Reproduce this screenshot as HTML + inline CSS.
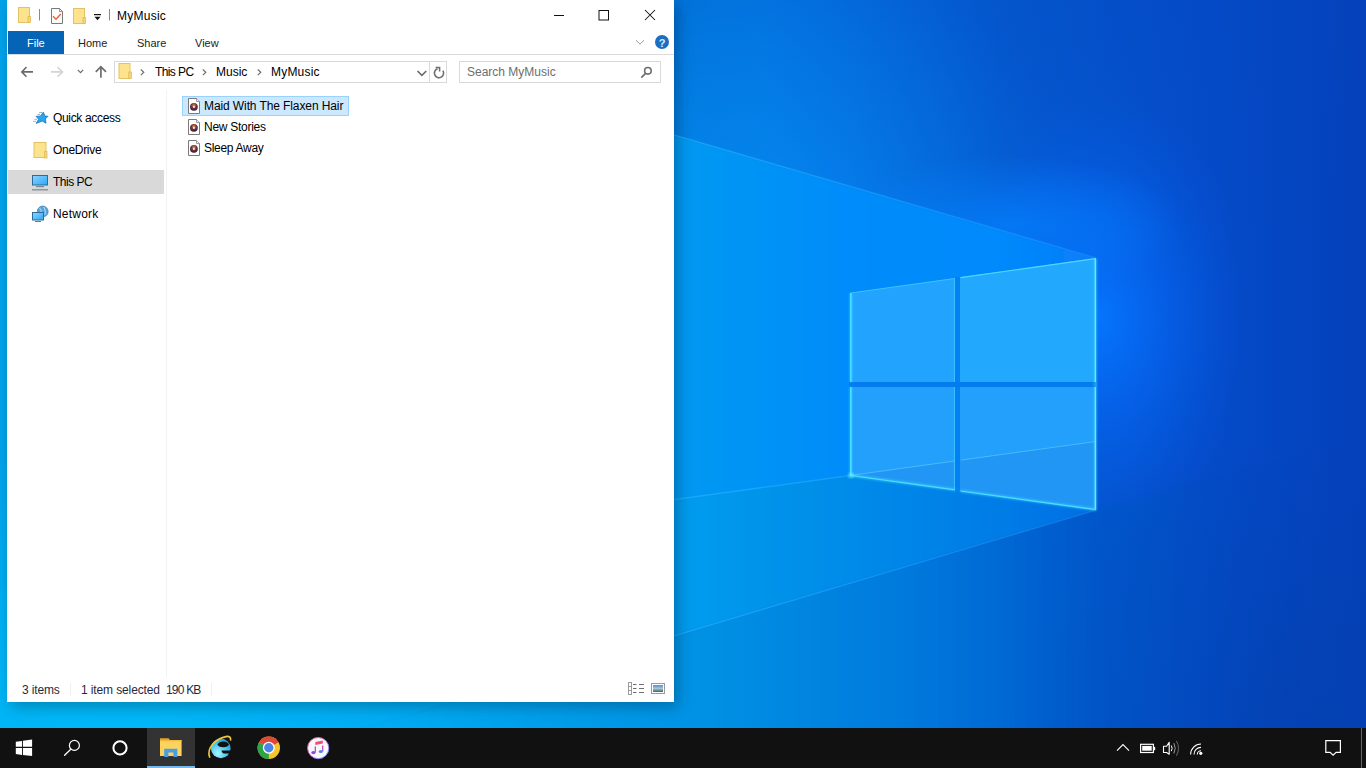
<!DOCTYPE html>
<html><head><meta charset="utf-8">
<style>
*{margin:0;padding:0;box-sizing:border-box}
html,body{width:1366px;height:768px;overflow:hidden;font-family:"Liberation Sans",sans-serif;background:#0a6fd6}
#wall{position:absolute;left:0;top:0;width:1366px;height:728px}
#win{position:absolute;left:7px;top:0;width:667px;height:702px;background:#fff;box-shadow:4px 5px 14px rgba(0,0,0,.26)}
.abs{position:absolute}
.t{position:absolute;font-size:12px;color:#000;white-space:nowrap;line-height:14px}
.tab{font-size:11px;color:#222}
.st{color:#1e2a44}
#ui{position:absolute;left:0;top:0;width:1366px;height:728px}
#taskbar{position:absolute;left:0;top:728px;width:1366px;height:40px;background:#111111}
</style></head>
<body>
<svg id="wall" width="1366" height="728" viewBox="0 0 1366 728">
  <defs>
    <linearGradient id="gTop" gradientUnits="userSpaceOnUse" x1="0" y1="0" x2="1366" y2="0">
      <stop offset="0" stop-color="rgb(0,150,228)"/>
      <stop offset="0.493" stop-color="rgb(0,131,228)"/>
      <stop offset="0.56" stop-color="rgb(2,130,234)"/>
      <stop offset="0.622" stop-color="rgb(3,118,230)"/>
      <stop offset="0.732" stop-color="rgb(4,92,210)"/>
      <stop offset="0.878" stop-color="rgb(4,76,202)"/>
      <stop offset="1" stop-color="rgb(4,64,186)"/>
    </linearGradient>
    <linearGradient id="gCone" gradientUnits="userSpaceOnUse" x1="0" y1="0" x2="1366" y2="0">
      <stop offset="0" stop-color="rgb(0,162,234)"/>
      <stop offset="0.51" stop-color="rgb(3,152,242)"/>
      <stop offset="0.622" stop-color="rgb(3,140,250)"/>
      <stop offset="0.73" stop-color="rgb(4,138,252)"/>
      <stop offset="0.80" stop-color="rgb(8,125,250)"/>
      <stop offset="1" stop-color="rgb(6,100,240)"/>
    </linearGradient>
    <linearGradient id="gBot" gradientUnits="userSpaceOnUse" x1="0" y1="0" x2="1366" y2="0">
      <stop offset="0" stop-color="rgb(0,176,244)"/>
      <stop offset="0.256" stop-color="rgb(0,174,244)"/>
      <stop offset="0.51" stop-color="rgb(5,146,228)"/>
      <stop offset="0.66" stop-color="rgb(3,122,221)"/>
      <stop offset="0.732" stop-color="rgb(4,105,212)"/>
      <stop offset="0.805" stop-color="rgb(5,88,200)"/>
      <stop offset="1" stop-color="rgb(6,65,182)"/>
    </linearGradient>
    <linearGradient id="botMaskG" gradientUnits="userSpaceOnUse" x1="1000" y1="0" x2="1300" y2="0">
      <stop offset="0" stop-color="#fff"/>
      <stop offset="1" stop-color="#000"/>
    </linearGradient>
    <mask id="botMask" maskUnits="userSpaceOnUse" x="0" y="0" width="1366" height="728">
      <rect width="1366" height="728" fill="url(#botMaskG)"/>
    </mask>
    <radialGradient id="glow" gradientUnits="userSpaceOnUse" cx="0" cy="0" r="1" gradientTransform="translate(1100,318) scale(150,230)">
      <stop offset="0" stop-color="rgb(6,118,255)" stop-opacity="0.95"/>
      <stop offset="0.45" stop-color="rgb(6,108,252)" stop-opacity="0.5"/>
      <stop offset="1" stop-color="rgb(6,90,230)" stop-opacity="0"/>
    </radialGradient>
    <radialGradient id="glow2" gradientUnits="userSpaceOnUse" cx="0" cy="0" r="1" gradientTransform="translate(1098,265) scale(45,60)">
      <stop offset="0" stop-color="rgb(30,150,255)" stop-opacity="0.8"/>
      <stop offset="1" stop-color="rgb(20,120,255)" stop-opacity="0"/>
    </radialGradient>
    <linearGradient id="beamFade" gradientUnits="userSpaceOnUse" x1="674" y1="0" x2="1096" y2="0">
      <stop offset="0" stop-color="#30b4ff" stop-opacity="0.6"/>
      <stop offset="0.6" stop-color="#30b4ff" stop-opacity="0.35"/>
      <stop offset="1" stop-color="#50c0ff" stop-opacity="0.2"/>
    </linearGradient>
    <radialGradient id="nearBeam" gradientUnits="userSpaceOnUse" cx="0" cy="0" r="1" gradientTransform="translate(760,210) scale(320,260)">
      <stop offset="0" stop-color="rgb(10,150,250)" stop-opacity="0.3"/>
      <stop offset="1" stop-color="rgb(10,150,250)" stop-opacity="0"/>
    </radialGradient>
    <radialGradient id="blGlow" gradientUnits="userSpaceOnUse" cx="0" cy="0" r="1" gradientTransform="translate(120,760) scale(560,320)">
      <stop offset="0" stop-color="rgb(0,195,255)" stop-opacity="0.7"/>
      <stop offset="1" stop-color="rgb(0,195,255)" stop-opacity="0"/>
    </radialGradient>
    <linearGradient id="gFloor" gradientUnits="userSpaceOnUse" x1="0" y1="0" x2="1366" y2="0">
      <stop offset="0" stop-color="rgb(0,166,236)"/>
      <stop offset="0.51" stop-color="rgb(3,155,238)"/>
      <stop offset="0.556" stop-color="rgb(4,148,234)"/>
      <stop offset="0.732" stop-color="rgb(4,124,230)"/>
      <stop offset="0.80" stop-color="rgb(6,112,230)"/>
      <stop offset="1" stop-color="rgb(6,90,220)"/>
    </linearGradient>
    <radialGradient id="glowUp" gradientUnits="userSpaceOnUse" cx="0" cy="0" r="1" gradientTransform="translate(1010,225) scale(170,70)">
      <stop offset="0" stop-color="rgb(4,130,255)" stop-opacity="0.7"/>
      <stop offset="1" stop-color="rgb(4,130,255)" stop-opacity="0"/>
    </radialGradient>
    <linearGradient id="topDark" gradientUnits="userSpaceOnUse" x1="0" y1="0" x2="0" y2="240">
      <stop offset="0" stop-color="rgb(4,70,190)" stop-opacity="0.3"/>
      <stop offset="1" stop-color="rgb(4,70,190)" stop-opacity="0"/>
    </linearGradient>
    <radialGradient id="brDark" gradientUnits="userSpaceOnUse" cx="0" cy="0" r="1" gradientTransform="translate(1300,740) scale(380,300)">
      <stop offset="0" stop-color="rgb(4,64,170)" stop-opacity="0.6"/>
      <stop offset="1" stop-color="rgb(4,64,170)" stop-opacity="0"/>
    </radialGradient>
    <filter id="soft" x="-5%" y="-5%" width="110%" height="110%"><feGaussianBlur stdDeviation="1.0"/></filter>
    <filter id="soft2" x="-5%" y="-5%" width="110%" height="110%"><feGaussianBlur stdDeviation="0.45"/></filter>
  </defs>
  <rect width="1366" height="728" fill="url(#gTop)"/>
  <rect width="1366" height="728" fill="url(#topDark)"/>
  <rect width="1366" height="728" fill="url(#nearBeam)"/>
  <rect width="1366" height="728" fill="url(#glow)"/>
  <rect width="1366" height="728" fill="url(#glowUp)"/>
  <polygon points="1096,258 -10,-64.4 -10,839 1096,510" fill="url(#gCone)" filter="url(#soft)"/>
  <polygon points="850,475.5 -10,593.4 -10,839 1096,510" fill="url(#gFloor)" filter="url(#soft)"/>
  <rect width="1366" height="728" fill="url(#blGlow)"/>
  <rect width="1366" height="728" fill="url(#brDark)"/>
  <g mask="url(#botMask)"><polygon points="1096,510 1400,430 1400,760 258,760" fill="url(#gBot)" filter="url(#soft)"/></g>
  
  
  <!-- beam lines -->
  <g filter="url(#soft2)" stroke="url(#beamFade)" stroke-width="1.3" fill="none">
    <line x1="674" y1="135" x2="1096" y2="258"/>
    <line x1="674" y1="499.6" x2="850" y2="475.5"/>
    <line x1="674" y1="635.8" x2="1096" y2="510"/>
  </g>
  <!-- panes -->
  
  <rect x="954.5" y="277" width="6" height="215" fill="rgb(4,128,242)"/>
  <rect x="849" y="381.5" width="248" height="6" fill="rgb(4,124,238)"/>
  <g filter="url(#soft2)">
    <polygon points="850,293 955,278 955,382 850,382" fill="rgb(34,164,254)"/>
    <polygon points="960,277.3 1096,258 1096,382 960,382" fill="rgb(34,168,253)"/>
    <polygon points="850,387 955,387 955,490 850,475.5" fill="rgb(34,160,252)"/>
    <polygon points="960,387 1096,387 1096,510 960,491" fill="rgb(34,160,252)"/>
    <polygon points="850,475.5 955,461 955,490" fill="rgb(34,150,244)"/>
    <polygon points="960,460.3 1096,441.5 1096,510 960,491" fill="rgb(34,150,244)"/>
    <g fill="none">
      <line x1="850.8" y1="382" x2="850.8" y2="293" stroke="#48e6ff" stroke-width="1.3"/>
      <line x1="850.8" y1="293" x2="955" y2="278.5" stroke="#3cc0ff" stroke-width="1"/>
      <line x1="954.4" y1="278.5" x2="954.4" y2="382" stroke="#38c4ff" stroke-width="1"/>
      <line x1="960.5" y1="277.6" x2="1095.5" y2="258.6" stroke="#50d8ff" stroke-width="1.1"/>
      <line x1="1095.4" y1="258.6" x2="1095.4" y2="382" stroke="#62f0ff" stroke-width="1.4"/>
      <line x1="850.8" y1="387" x2="850.8" y2="475.5" stroke="#4ceaff" stroke-width="1.3"/>
      <line x1="850.8" y1="475.5" x2="955" y2="489.8" stroke="#48d8ff" stroke-width="1.2"/>
      <line x1="954.4" y1="387" x2="954.4" y2="489.6" stroke="#38c4ff" stroke-width="1"/>
      <line x1="960.5" y1="491" x2="1095.5" y2="509.6" stroke="#48d8ff" stroke-width="1.2"/>
      <line x1="1095.4" y1="387" x2="1095.4" y2="509.6" stroke="#62f0ff" stroke-width="1.4"/>
      <path d="M850 475.5 L954 461.1 M961 460.1 L1096 441.5" stroke="#70d8ff" stroke-width="1" opacity="0.5"/>
    </g>
  </g>
  <g filter="url(#soft)" fill="none" opacity="0.45">
    <path d="M850.8 293 V382 M850.8 387 V475.5 L955 489.8 M960.5 491 L1095.5 509.6 V258.6" stroke="#50eaff" stroke-width="2.6"/>
  </g>
  <circle cx="851" cy="475.5" r="3" fill="#70f4ff" opacity="0.5" filter="url(#soft)"/>
</svg>



<div id="win"></div>
<div id="ui">
  <!-- title bar icons -->
  <svg class="abs" style="left:0;top:0" width="674" height="90" viewBox="0 0 674 90">
    <!-- folder 1 -->
    <rect x="18.5" y="7.5" width="11" height="15" fill="#fde38d" stroke="#e4c264" stroke-width="1"/>
    <rect x="28" y="16.5" width="2.5" height="6" fill="#f6d67a" stroke="#e0bb58" stroke-width="0.8"/>
    <line x1="39.5" y1="9" x2="39.5" y2="20.5" stroke="#8a8a8a" stroke-width="1"/>
    <!-- properties doc -->
    <path d="M51.5 8.5 H59.5 L62.5 11.5 V23.5 H51.5 Z" fill="#fbfbfb" stroke="#7a7a7a" stroke-width="1"/>
    <path d="M59.5 8.5 V11.5 H62.5" fill="none" stroke="#7a7a7a" stroke-width="0.8"/>
    <path d="M53 16.3 L56 19.2 L60.8 14.1" fill="none" stroke="#e0643a" stroke-width="1.4"/>
    <!-- folder 2 -->
    <rect x="73.5" y="8.5" width="11" height="15" fill="#fde38d" stroke="#e4c264" stroke-width="1"/>
    <rect x="83" y="17.5" width="2.5" height="6" fill="#f6d67a" stroke="#e0bb58" stroke-width="0.8"/>
    <!-- dropdown -->
    <rect x="94" y="14" width="7" height="1.2" fill="#111"/>
    <path d="M94.5 16.8 H100.5 L97.5 20.2 Z" fill="#111"/>
    <line x1="109.5" y1="9" x2="109.5" y2="20.5" stroke="#8a8a8a" stroke-width="1"/>
    <!-- min max close -->
    <rect x="554" y="15" width="10" height="1" fill="#111"/>
    <rect x="599" y="10.5" width="9.5" height="9.5" fill="none" stroke="#111" stroke-width="1"/>
    <path d="M645 10 L655 20 M655 10 L645 20" stroke="#111" stroke-width="1.05"/>
    <!-- ribbon expand + help -->
    <path d="M636 40.3 L640 44.2 L644 40.3" fill="none" stroke="#9a9a9a" stroke-width="1"/>
    <circle cx="662" cy="42" r="7" fill="#1b6ec2"/>
    <text x="662" y="46.5" text-anchor="middle" font-family="Liberation Sans" font-weight="bold" font-size="11" fill="#d6f0ff">?</text>
    <!-- File tab -->
    <rect x="8" y="31" width="56" height="23" fill="#0564b6"/>
    <!-- ribbon bottom line -->
    <rect x="7" y="54" width="667" height="1" fill="#dadbdc"/>
    <!-- nav arrows -->
    <path d="M26.5 67 L21.8 71.9 L26.5 76.8 M22 71.9 H33" fill="none" stroke="#6a6a6a" stroke-width="1.6"/>
    <path d="M57.5 67 L62.5 71.9 L57.5 76.8 M51 71.9 H62" fill="none" stroke="#d4d4d4" stroke-width="1.6"/>
    <path d="M77.8 69.9 L80.5 72.6 L83.2 69.9" fill="none" stroke="#6a6a6a" stroke-width="1.2"/>
    <path d="M95.8 71.8 L100.9 66.6 L106 71.8 M100.9 67 V77.7" fill="none" stroke="#6e6e6e" stroke-width="1.7"/>
    <!-- address box -->
    <rect x="114.5" y="61.5" width="332" height="21" fill="#fff" stroke="#d9d9d9" stroke-width="1"/>
    <line x1="429.5" y1="62" x2="429.5" y2="82" stroke="#d9d9d9" stroke-width="1"/>
    <rect x="119" y="63.5" width="11" height="15" fill="#fde38d" stroke="#e4c264" stroke-width="1"/>
    <rect x="128.8" y="72" width="2.5" height="6.5" fill="#f6d67a" stroke="#e0bb58" stroke-width="0.8"/>
    <path d="M140.8 69.5 L143.8 72.3 L140.8 75.1" fill="none" stroke="#707070" stroke-width="1.2"/>
    <path d="M202.8 69.5 L205.8 72.3 L202.8 75.1" fill="none" stroke="#707070" stroke-width="1.2"/>
    <path d="M257.8 69.5 L260.8 72.3 L257.8 75.1" fill="none" stroke="#707070" stroke-width="1.2"/>
    <path d="M417.5 71 L421.9 75.4 L426.3 71" fill="none" stroke="#6a6a6a" stroke-width="1.6"/>
    <path d="M442.9 70.6 A4.6 4.6 0 1 1 437.6 68.7" fill="none" stroke="#6e6e6e" stroke-width="1.6"/>
    <path d="M435.6 67.4 H439.6 V71.4" fill="none" stroke="#6e6e6e" stroke-width="1.5"/>
    <!-- search box -->
    <rect x="459.5" y="61.5" width="201" height="21" fill="#fff" stroke="#d9d9d9" stroke-width="1"/>
    <circle cx="647.9" cy="70.8" r="3.3" fill="none" stroke="#6e6e6e" stroke-width="1.6"/>
    <path d="M645.6 73.4 L641.3 77.7" stroke="#6e6e6e" stroke-width="1.7"/>
  </svg>
  <div class="t" style="left:117px;top:9px;letter-spacing:0.25px">MyMusic</div>
  <div class="t tab" style="left:27px;top:36px;color:#fff">File</div>
  <div class="t tab" style="left:78px;top:36px">Home</div>
  <div class="t tab" style="left:137px;top:36px">Share</div>
  <div class="t tab" style="left:195px;top:36px">View</div>
  <div class="t" style="left:155px;top:65px;letter-spacing:-0.6px">This PC</div>
  <div class="t" style="left:216px;top:65px">Music</div>
  <div class="t" style="left:271px;top:65px;letter-spacing:0.2px">MyMusic</div>
  <div class="t" style="left:467px;top:65px;color:#6d6d6d">Search MyMusic</div>

  <!-- nav pane -->
  <div class="abs" style="left:8px;top:170px;width:156px;height:24px;background:#d9d9d9"></div>
  <div class="abs" style="left:166px;top:90px;width:1px;height:587px;background:#f2f2f2"></div>
  <svg class="abs" style="left:0;top:90px" width="180" height="140" viewBox="0 90 180 140">
    <!-- star -->
    <path d="M43.4 112.3 L44.9 116.1 L47.9 116.3 L45.3 119 L46 123.2 L42.2 121 L36.2 123.4 L38.6 119.2 L36.1 116.3 L40.3 116.2 Z" fill="#2aa6ee" stroke="#1d7cc4" stroke-width="0.9" stroke-linejoin="round"/>
    <path d="M39.2 112.6 H42.5 M37.6 114.4 H40 M34.5 119.3 H36.8 M33.2 121.3 H35.8" stroke="#5f86a8" stroke-width="0.7"/>
    <!-- onedrive folder -->
    <rect x="34" y="142.5" width="12" height="15" fill="#fde38d" stroke="#e4c264" stroke-width="1"/>
    <rect x="44.5" y="151.5" width="2.5" height="6.5" fill="#f6d67a" stroke="#e0bb58" stroke-width="0.8"/>
    <!-- this pc -->
    <defs><linearGradient id="scr" x1="0" y1="0" x2="1" y2="1"><stop offset="0" stop-color="#8fd4ff"/><stop offset="1" stop-color="#2aa8f4"/></linearGradient></defs>
    <rect x="32.5" y="175.5" width="15" height="9.5" fill="url(#scr)" stroke="#2c6c9c" stroke-width="1"/>
    <rect x="36" y="186" width="8" height="1.2" fill="#7a8a96"/>
    <rect x="32" y="189" width="16" height="1.5" fill="#8c98a2"/>
    <!-- network -->
    <circle cx="42.7" cy="211.5" r="5.4" fill="#5aa6d8" stroke="#3b7eb0" stroke-width="0.8"/>
    <path d="M39.5 208 Q42 210 41 213 M44 207 Q46 211 45 215" stroke="#b8e4ff" stroke-width="0.9" fill="none"/>
    <rect x="32.5" y="212.5" width="11" height="7.5" fill="url(#scr)" stroke="#2c6c9c" stroke-width="1"/>
    <rect x="35" y="221" width="6" height="1" fill="#6a7a88"/>
  </svg>
  <div class="t" style="left:53px;top:111px;letter-spacing:-0.33px">Quick access</div>
  <div class="t" style="left:53px;top:143px;letter-spacing:-0.3px">OneDrive</div>
  <div class="t" style="left:53px;top:175px;letter-spacing:-0.5px">This PC</div>
  <div class="t" style="left:53px;top:207px;letter-spacing:0.2px">Network</div>

  <!-- content -->
  <div class="abs" style="left:182px;top:96px;width:167px;height:20px;background:#cce8ff;border:1px solid #99d1ff"></div>
  <svg class="abs" style="left:180px;top:94px" width="30" height="64" viewBox="180 94 30 64">
    <defs>
      <radialGradient id="disc" cx="0.5" cy="0.35" r="0.6"><stop offset="0" stop-color="#e39a5a"/><stop offset="0.5" stop-color="#7a3a3a"/><stop offset="1" stop-color="#3a1c3c"/></radialGradient>
      <g id="mfile">
        <path d="M188.5 98.5 H196.5 L199.5 101.5 V113.5 H188.5 Z" fill="#fff" stroke="#7a7a7a" stroke-width="1"/>
        <path d="M196.5 98.5 V101.5 H199.5" fill="#eee" stroke="#8a8a8a" stroke-width="0.8"/>
        <circle cx="193.9" cy="106.8" r="3.9" fill="url(#disc)"/>
        <rect x="193" y="106" width="1.8" height="1.8" fill="#eee"/>
      </g>
    </defs>
    <use href="#mfile"/>
    <use href="#mfile" y="21"/>
    <use href="#mfile" y="42"/>
  </svg>
  <div class="t" style="left:204px;top:99px;letter-spacing:-0.1px">Maid With The Flaxen Hair</div>
  <div class="t" style="left:204px;top:120px;letter-spacing:-0.27px">New Stories</div>
  <div class="t" style="left:204px;top:141px;letter-spacing:-0.3px">Sleep Away</div>

  <!-- status bar -->
  <div class="t st" style="left:22px;top:683px;letter-spacing:-0.15px">3 items</div>
  <div class="abs" style="left:70px;top:683px;width:1px;height:13px;background:#f0f0f0"></div>
  <div class="t st" style="left:81px;top:683px;letter-spacing:-0.12px">1 item selected</div>
  <div class="t st" style="left:166px;top:683px;letter-spacing:-0.8px">190 KB</div>
  <div class="abs" style="left:211px;top:683px;width:1px;height:13px;background:#f0f0f0"></div>
  <svg class="abs" style="left:620px;top:676px" width="54" height="24" viewBox="620 676 54 24">
    <rect x="628.5" y="682.5" width="3" height="12" fill="#fff" stroke="#9a9a9a" stroke-width="1"/>
    <path d="M628.5 686.5 H631.5 M628.5 690.5 H631.5" stroke="#9a9a9a" stroke-width="1"/>
    <path d="M633 684.5 H636.5 M639 684.5 H644 M633 688.5 H636.5 M639 688.5 H644 M633 692.5 H636.5 M639 692.5 H644" stroke="#6e6e6e" stroke-width="1"/>
    <rect x="651.5" y="683.5" width="13" height="10" fill="#fff" stroke="#9a9a9a" stroke-width="1"/>
    <defs><linearGradient id="pic" x1="0" y1="0" x2="0" y2="1"><stop offset="0" stop-color="#5b8ad0"/><stop offset="0.5" stop-color="#a8c4d8"/><stop offset="1" stop-color="#3a6a5a"/></linearGradient></defs>
    <rect x="653" y="685" width="10" height="7" fill="url(#pic)"/>
  </svg>
</div>

<div id="taskbar">
<svg class="abs" style="left:0;top:0" width="1366" height="40" viewBox="0 728 1366 40">
  <!-- start -->
  <g fill="#fff">
    <polygon points="15.8,741.8 22,740.9 22,746.8 15.8,746.8"/>
    <polygon points="22.9,740.8 32.1,739.6 32.1,746.8 22.9,746.8"/>
    <polygon points="15.8,747.9 22,747.9 22,755 15.8,753.9"/>
    <polygon points="22.9,747.9 32.1,747.9 32.1,756 22.9,755"/>
  </g>
  <!-- search -->
  <circle cx="74.4" cy="745.4" r="5" fill="none" stroke="#fff" stroke-width="1.2"/>
  <path d="M70.8 749.2 L64.6 755.3" stroke="#fff" stroke-width="1.3" stroke-linecap="round"/>
  <!-- cortana -->
  <circle cx="120" cy="747.9" r="6.6" fill="none" stroke="#fff" stroke-width="2"/>
  <!-- explorer active -->
  <rect x="147" y="728" width="48" height="40" fill="#333333"/>
  <rect x="147" y="766" width="48" height="2" fill="#76b9ed"/>
  <path d="M160 738.3 H168.5 L170 740 H160 Z" fill="#e2a72a"/>
  <rect x="160" y="740" width="21.6" height="16" fill="#fcd35f"/>
  <rect x="160" y="740" width="21.6" height="1.2" fill="#f0b93a"/>
  <path d="M164.2 748.8 H177.3 V757 H173.4 V752.4 H168.4 V757 H164.2 Z" fill="#4a9fe0"/>
  <!-- IE -->
  <defs>
    <radialGradient id="ieg" cx="0.35" cy="0.75" r="0.9"><stop offset="0" stop-color="#a8f4ff"/><stop offset="0.6" stop-color="#3cc0f0"/><stop offset="1" stop-color="#1a8ad8"/></radialGradient>
    <linearGradient id="chr" x1="0" y1="0" x2="0" y2="1"><stop offset="0" stop-color="#f04070"/><stop offset="0.6" stop-color="#a050d8"/><stop offset="1" stop-color="#4a80f0"/></linearGradient>
    <linearGradient id="itb" x1="0" y1="0" x2="1" y2="1"><stop offset="0" stop-color="#ff5a8a"/><stop offset="0.5" stop-color="#c060e0"/><stop offset="1" stop-color="#60b0ff"/></linearGradient>
  </defs>
  <circle cx="220.8" cy="748.4" r="9.8" fill="url(#ieg)"/>
  <ellipse cx="223.2" cy="744.4" rx="5.6" ry="2.8" fill="#111"/>
  <path d="M221.5 750.6 H231.5 V753.4 H223.5 Q221.5 752.6 221.5 750.6 Z" fill="#111"/>
  <path d="M209.6 757 Q207.3 750.5 212.8 744 Q219 737.8 226 736.6 Q231 735.8 230.6 739.8" fill="none" stroke="#f0c83c" stroke-width="1.7" stroke-linecap="round"/>
  <!-- chrome -->
  <circle cx="268.8" cy="747.8" r="11.2" fill="#f7c52a"/>
  <path d="M268.8 747.8 L259.1 742.2 A11.2 11.2 0 0 1 278.5 742.2 Z" fill="#e0473a"/>
  <path d="M268.8 747.8 L259.1 742.2 A11.2 11.2 0 0 0 268.8 759 Z" fill="#2da34a"/>
  <path d="M268.8 742.2 H278.5 M263.9 750.6 L259.1 742.2 M273.7 750.6 L268.8 759" stroke="none"/>
  <circle cx="268.8" cy="747.8" r="6" fill="#fff"/>
  <circle cx="268.8" cy="747.8" r="4.7" fill="#4a86e8"/>
  <!-- itunes -->
  <circle cx="318.2" cy="748.1" r="10.6" fill="#fbf7fc" stroke="url(#itb)" stroke-width="1"/>
  <path d="M315.3 746.6 V752.5 M322.7 745.4 V751.4" stroke="url(#chr)" stroke-width="1.3"/>
  <path d="M315.3 742 L322.8 740.6 V743.6 L315.3 745 Z" fill="#f0506a"/>
  <ellipse cx="313.4" cy="752.6" rx="2.1" ry="1.6" fill="#8a4ae0"/>
  <ellipse cx="320.8" cy="751.5" rx="2.1" ry="1.6" fill="#4a8af0"/>
  <!-- tray -->
  <path d="M1117 750.6 L1123 744.6 L1129 750.6" fill="none" stroke="#fff" stroke-width="1.1"/>
  <rect x="1140.6" y="744.3" width="12.8" height="8.2" fill="none" stroke="#fff" stroke-width="1.2"/>
  <rect x="1142.2" y="745.9" width="9.5" height="4.8" fill="#fff"/>
  <rect x="1153.9" y="746.8" width="1.3" height="3.4" fill="#fff"/>
  <path d="M1163.5 746.2 H1166.6 L1169.2 742.3 V754.2 L1166.6 752.5 H1163.5 Z" fill="none" stroke="#fff" stroke-width="1.1" stroke-linejoin="round"/>
  <path d="M1171.3 745.5 Q1173 748.3 1171.3 751.2" fill="none" stroke="#fff" stroke-width="1"/>
  <path d="M1173.8 743.2 Q1176.7 748.3 1173.8 753.5" fill="none" stroke="#9a9a9a" stroke-width="1"/>
  <path d="M1176.4 740.9 Q1180.6 748.3 1176.4 755.7" fill="none" stroke="#6a6a6a" stroke-width="1"/>
  <g fill="none" stroke="#fff" stroke-width="1.1">
    <path d="M1190.6 754.4 A10.4 10.4 0 0 1 1201 744"/>
    <path d="M1194 754.4 A7 7 0 0 1 1201 747.4"/>
    <path d="M1197.3 754.4 A3.7 3.7 0 0 1 1201 750.7"/>
  </g>
  <circle cx="1200.8" cy="753.3" r="1.6" fill="#fff"/>
  <!-- action center -->
  <path d="M1325.8 740.6 H1340.4 V752.3 H1336.1 L1333.1 755.2 L1330.1 752.3 H1325.8 Z" fill="none" stroke="#fff" stroke-width="1.2"/>
  <rect x="1361" y="728" width="1" height="40" fill="#666"/>
</svg>
</div>

</body></html>
